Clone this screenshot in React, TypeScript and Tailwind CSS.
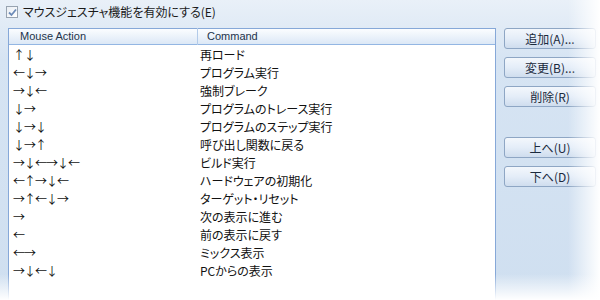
import React from "react";

const rows: [string, string][] = [
  ["↑↓", "再ロード"],
  ["←↓→", "プログラム実行"],
  ["→↓←", "強制ブレーク"],
  ["↓→", "プログラムのトレース実行"],
  ["↓→↓", "プログラムのステップ実行"],
  ["↓→↑", "呼び出し関数に戻る"],
  ["→↓←→↓←", "ビルド実行"],
  ["←↑→↓←", "ハードウェアの初期化"],
  ["→↑←↓→", "ターゲット・リセット"],
  ["→", "次の表示に進む"],
  ["←", "前の表示に戻す"],
  ["←→", "ミックス表示"],
  ["→↓←↓", "PCからの表示"],
];

const jp = "font-['Noto_Sans_CJK_JP',sans-serif] [font-feature-settings:'palt']";

const Btn = ({ label, className = "" }: { label: string; className?: string }) => (
  <button
    className={`h-[21px] w-[92px] rounded-[3px] border border-[#8ea6c4] bg-gradient-to-b from-[#f3f7fc] via-[#e4edf8] to-[#cfddee] text-[12px] leading-none text-[#1b2a3d] ${jp} ${className}`}
  >
    {label}
  </button>
);

export default function App() {
  return (
    <div className="relative h-[300px] w-[600px] overflow-hidden bg-gradient-to-b from-[#e9f0f8] via-[#d6e4f3] via-[20%] to-[#cfdff0]">
      {/* checkbox row */}
      <div className={`flex h-[28px] items-center gap-[5px] pl-[6px] pb-[4px] text-[12px] text-[#1a1a1a] ${jp}`}>
        <span className="flex h-[12px] w-[12px] items-center justify-center border border-[#98a3b0] bg-gradient-to-br from-[#e9eef4] to-white">
          <svg width="9" height="9" viewBox="0 0 9 9">
            <path d="M1 4.5 L3.5 7 L8 1.5" fill="none" stroke="#6c8bb8" strokeWidth="1.8" />
          </svg>
        </span>
        <span>マウスジェスチャ機能を有効にする(E)</span>
      </div>

      <div className="flex gap-[8px] pl-[8px]">
        {/* list */}
        <div className="h-[280px] w-[488px] border border-[#86a8d8] bg-white">
          <div className="flex h-[16px] items-center border-b border-[#93b6e3] bg-gradient-to-b from-[#fbfdff] to-[#dce8f6] font-['Liberation_Sans',sans-serif] text-[11px] text-[#22334a]">
            <div className="w-[189px] border-r border-[#b3cbe9] pl-[11px]">Mouse Action</div>
            <div className="pl-[9px]">Command</div>
          </div>
          <div className={`pt-[1px] text-[12px] text-[#111] ${jp}`}>
            {rows.map(([g, c]) => (
              <div key={c} className="flex h-[18px] items-center">
                <div className="w-[191px] pl-[4px] tracking-[-1px]">{g}</div>
                <div>{c}</div>
              </div>
            ))}
          </div>
        </div>

        {/* buttons */}
        <div className="flex flex-col">
          <Btn label="追加(A)..." />
          <Btn label="変更(B)..." className="mt-[8px]" />
          <Btn label="削除(R)" className="mt-[8px]" />
          <Btn label="上へ(U)" className="mt-[30px]" />
          <Btn label="下へ(D)" className="mt-[8px]" />
        </div>
      </div>

      {/* fades */}
      <div className="pointer-events-none absolute right-0 top-0 h-full w-[32px] bg-gradient-to-r from-transparent to-white" />
      <div className="pointer-events-none absolute bottom-0 left-0 h-[26px] w-full bg-gradient-to-b from-transparent to-white" />
    </div>
  );
}
